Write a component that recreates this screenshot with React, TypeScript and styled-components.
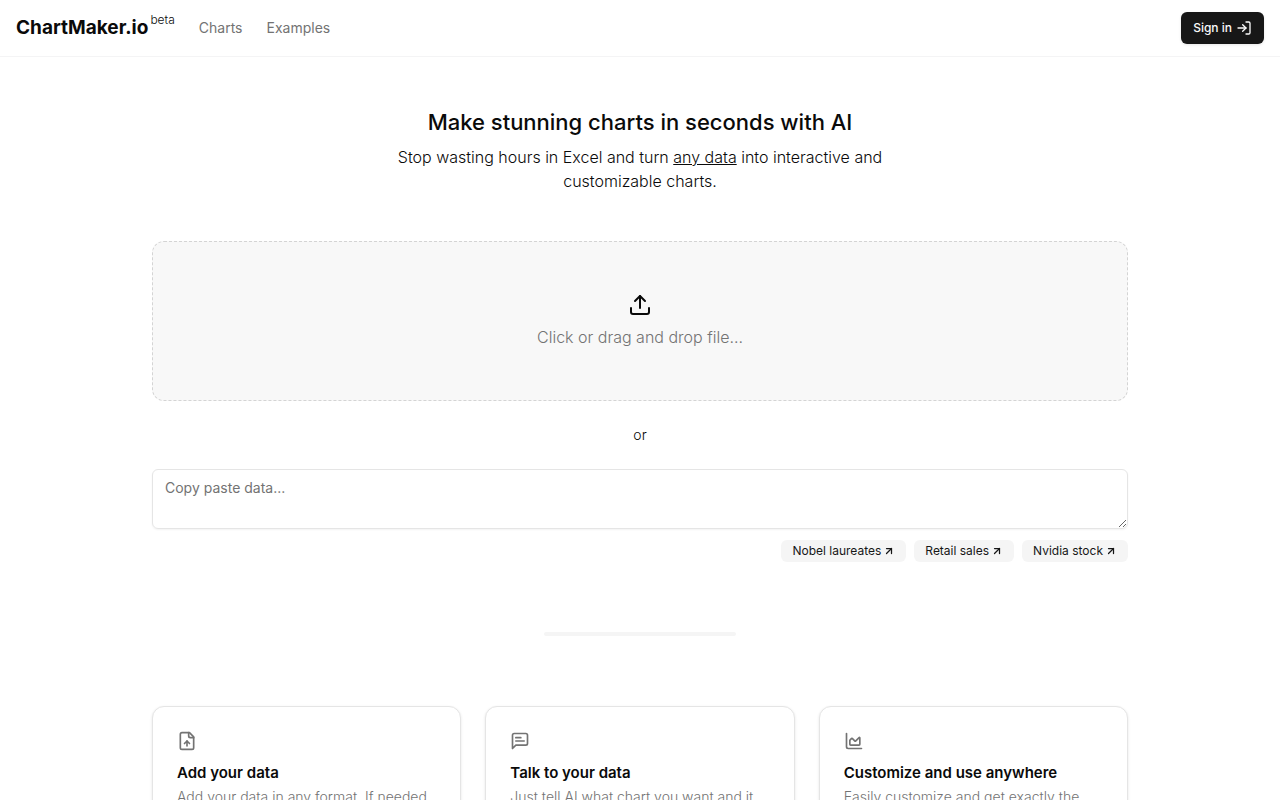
import React from "react";
import styled, { createGlobalStyle } from "styled-components";
import { ArrowUpRight, LogIn, Upload } from "lucide-react";

const GlobalStyle = createGlobalStyle`
  *, *::before, *::after { box-sizing: border-box; }
  body {
    margin: 0;
    background: #ffffff;
    color: #0a0a0a;
    font-family: Inter, "Liberation Sans", sans-serif;
    font-size: 16px;
    line-height: 24px;
    font-weight: 300;
    -webkit-font-smoothing: antialiased;
  }
  h1, h2, h3, p { margin: 0; }
  a { color: inherit; text-decoration: none; }
  button, textarea { font-family: inherit; }
`;

const Header = styled.header`
  display: flex;
  align-items: center;
  justify-content: space-between;
  height: 57px;
  padding: 0 16px;
  border-bottom: 1px solid #f4f4f5;
`;

const Nav = styled.nav`
  display: flex;
  align-items: center;
  gap: 24px;
`;

const Logo = styled.a`
  display: flex;
  align-items: flex-start;
  gap: 2px;
  font-size: 19px;
  line-height: 28px;
  font-weight: 700;
`;

const Beta = styled.span`
  font-size: 12px;
  line-height: 12px;
  font-weight: 300;
`;

const NavLink = styled.a`
  color: #737373;
  font-size: 14px;
  line-height: 20px;
  font-weight: 400;
`;

const SignIn = styled.button`
  display: inline-flex;
  align-items: center;
  gap: 4px;
  height: 32px;
  padding: 0 12px;
  border: 0;
  border-radius: 6px;
  background: #171717;
  color: #fafafa;
  font-size: 12px;
  line-height: 16px;
  font-weight: 500;
  box-shadow: 0 1px 3px rgba(0, 0, 0, 0.1);
  cursor: pointer;
`;

const Main = styled.main`
  display: flex;
  flex-direction: column;
  max-width: 1024px;
  margin: 0 auto;
  padding: 48px 24px;
`;

const Hero = styled.section`
  align-self: center;
  max-width: 512px;
  text-align: center;
`;

const Title = styled.h1`
  margin-bottom: 6px;
  font-size: 22px;
  line-height: 34px;
  font-weight: 500;
`;

const Underlined = styled.span`
  text-decoration: underline;
`;

const DropZone = styled.button`
  display: flex;
  flex-direction: column;
  align-items: center;
  justify-content: center;
  gap: 8px;
  width: 100%;
  height: 160px;
  margin-top: 48px;
  border: 1px dashed #d4d4d4;
  border-radius: 12px;
  background: #f8f8f8;
  color: #0a0a0a;
  font-size: 16px;
  line-height: 24px;
  font-weight: 300;
  cursor: pointer;
`;

const DropLabel = styled.span`
  color: #737373;
`;

const Divider = styled.p`
  margin: 24px 0;
  text-align: center;
  font-size: 14px;
  line-height: 20px;
`;

const DataInput = styled.textarea`
  display: block;
  width: 100%;
  height: 60px;
  padding: 8px 12px;
  border: 1px solid #e5e5e5;
  border-radius: 6px;
  background: transparent;
  color: #0a0a0a;
  font-size: 14px;
  line-height: 20px;
  font-weight: 400;
  box-shadow: 0 1px 2px rgba(0, 0, 0, 0.05);
  resize: vertical;
  &::placeholder { color: #737373; opacity: 1; }
`;

const Samples = styled.div`
  display: flex;
  justify-content: flex-end;
  gap: 8px;
  margin-top: 11px;
`;

const Sample = styled.button`
  display: inline-flex;
  align-items: center;
  gap: 2px;
  height: 22px;
  padding: 0 11px;
  border: 0;
  border-radius: 6px;
  background: #f5f5f5;
  color: #171717;
  font-size: 12px;
  line-height: 16px;
  font-weight: 400;
  cursor: pointer;
`;

const Separator = styled.hr`
  align-self: center;
  width: 192px;
  height: 4px;
  margin: 70px 0;
  border: 0;
  border-radius: 4px;
  background: #f5f5f5;
`;

const Cards = styled.section`
  display: grid;
  grid-template-columns: repeat(3, minmax(0, 1fr));
  gap: 24px;
`;

const Card = styled.article`
  padding: 24px;
  border: 1px solid #e5e5e5;
  border-radius: 12px;
  background: #ffffff;
  box-shadow: 0 1px 3px rgba(0, 0, 0, 0.1);
`;

const CardIcon = styled.svg`
  display: block;
  width: 20px;
  height: 20px;
  fill: none;
  stroke: #737373;
  stroke-width: 2;
  stroke-linecap: round;
  stroke-linejoin: round;
`;

const CardTitle = styled.h2`
  margin: 12px 0 4px;
  font-size: 15px;
  line-height: 20px;
  font-weight: 600;
`;

const CardText = styled.p`
  color: #737373;
  font-size: 14px;
  line-height: 20px;
`;

const samples = ["Nobel laureates", "Retail sales", "Nvidia stock"];

const features = [
  {
    title: "Add your data",
    text: "Add your data in any format. If needed",
    strokes: [
      "M15 2H6a2 2 0 0 0-2 2v16a2 2 0 0 0 2 2h12a2 2 0 0 0 2-2V7Z",
      "M14 2v4a2 2 0 0 0 2 2h4",
      "M12 12v6",
      "m15 15-3-3-3 3",
    ],
  },
  {
    title: "Talk to your data",
    text: "Just tell AI what chart you want and it",
    strokes: [
      "M21 15a2 2 0 0 1-2 2H7l-4 4V5a2 2 0 0 1 2-2h14a2 2 0 0 1 2 2z",
      "M13 8H7",
      "M17 12H7",
    ],
  },
  {
    title: "Customize and use anywhere",
    text: "Easily customize and get exactly the",
    strokes: [
      "M3 3v16a2 2 0 0 0 2 2h16",
      "M7 11.207a.5.5 0 0 1 .146-.353l2-2a.5.5 0 0 1 .708 0l3.292 3.292a.5.5 0 0 0 .708 0l4.292-4.292a.5.5 0 0 1 .854.353V16a1 1 0 0 1-1 1H8a1 1 0 0 1-1-1z",
    ],
  },
];

export default function App() {
  return (
    <>
      <GlobalStyle />
      <Header>
        <Nav>
          <Logo href="#">
            ChartMaker.io<Beta>beta</Beta>
          </Logo>
          <NavLink href="#charts">Charts</NavLink>
          <NavLink href="#examples">Examples</NavLink>
        </Nav>
        <SignIn type="button">
          Sign in <LogIn size={16} />
        </SignIn>
      </Header>
      <Main>
        <Hero>
          <Title>Make stunning charts in seconds with AI</Title>
          <p>
            Stop wasting hours in Excel and turn <Underlined>any data</Underlined> into
            interactive and customizable charts.
          </p>
        </Hero>
        <DropZone type="button">
          <Upload size={24} />
          <DropLabel>Click or drag and drop file...</DropLabel>
        </DropZone>
        <Divider>or</Divider>
        <DataInput aria-label="Data" placeholder="Copy paste data..." />
        <Samples>
          {samples.map((name) => (
            <Sample type="button" key={name}>
              {name} <ArrowUpRight size={12} strokeWidth={2.5} />
            </Sample>
          ))}
        </Samples>
        <Separator />
        <Cards>
          {features.map(({ title, text, strokes }) => (
            <Card key={title}>
              <CardIcon viewBox="0 0 24 24" aria-hidden="true">
                {strokes.map((d) => (
                  <path key={d} d={d} />
                ))}
              </CardIcon>
              <CardTitle>{title}</CardTitle>
              <CardText>{text}</CardText>
            </Card>
          ))}
        </Cards>
      </Main>
    </>
  );
}
